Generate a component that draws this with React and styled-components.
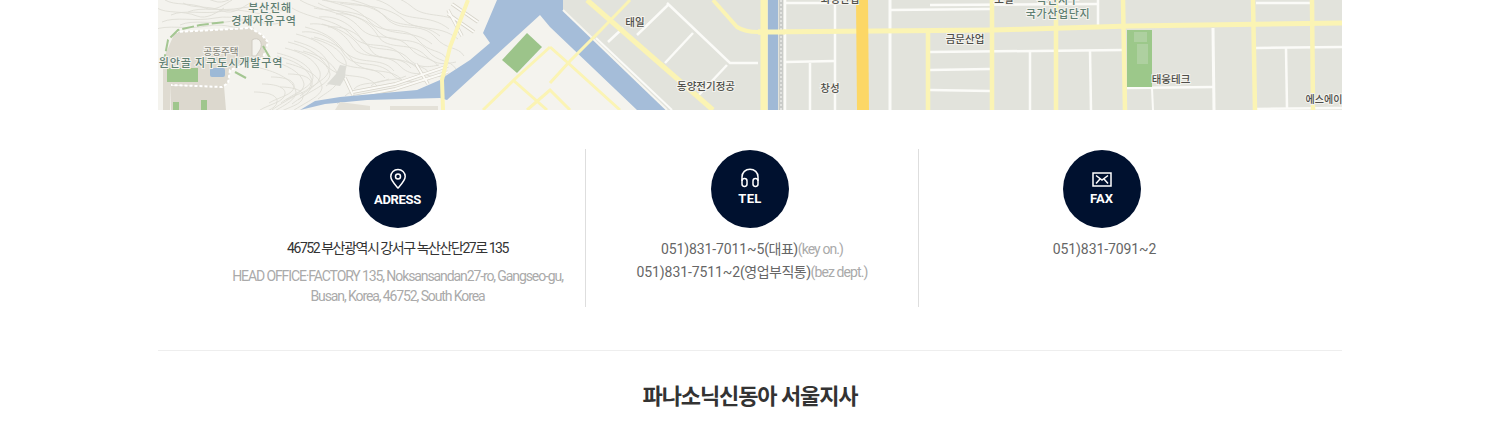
import React from 'react'
import styled, { createGlobalStyle } from 'styled-components'

const GlobalStyle = createGlobalStyle`
  * { box-sizing: border-box; }
  html, body { margin: 0; padding: 0; background: #fff; }
  body {
    font-family: Roboto, "Noto Sans CJK KR", sans-serif;
    color: #666;
    overflow: hidden;
  }
`

const Wrap = styled.div`
  width: 1184px;
  height: 430px;
  margin: 0 auto;
`

const MapBox = styled.div`
  height: 110px;
  overflow: hidden;
  svg { display: block; }
`

const InfoRow = styled.ul`
  display: grid;
  grid-template-columns: 375px 333px 372px;
  list-style: none;
  margin: 39px 0 0;
  padding: 0 0 0 52px;
  height: 158px;
`

const InfoCol = styled.li`
  display: flex;
  flex-direction: column;
  align-items: center;
  padding-top: 1px;
  border-left: ${({ $line }) => ($line ? '1px solid #dedede' : '0')};
`

const Circle = styled.div`
  width: 78px;
  height: 78px;
  flex: none;
  border-radius: 50%;
  background: #00112f;
  color: #fff;
  display: flex;
  flex-direction: column;
  align-items: center;
  padding-top: ${({ $top }) => $top}px;
  margin-right: ${({ $shift }) => $shift || 0}px;
  svg { display: block; }
`

const CircleLabel = styled.span`
  font-size: 13px;
  font-weight: 700;
  line-height: 16px;
  letter-spacing: ${({ $spacing }) => $spacing}px;
  margin-top: ${({ $gap }) => $gap}px;
`

const Address = styled.p`
  margin: 10px 0 0;
  font-size: 14px;
  line-height: 20px;
  letter-spacing: -1.45px;
  color: #333;
`

const Desc = styled.p`
  margin: 8px 0 0;
  width: 345px;
  font-size: 14px;
  line-height: 20px;
  letter-spacing: -1.1px;
  color: #aaa;
  text-align: center;
`

const Tel = styled.p`
  margin: ${({ $first }) => ($first ? '11px' : '3px')} 0 0;
  font-size: 14px;
  line-height: 20px;
  letter-spacing: -0.1px;
  color: #666;
`

const Note = styled.span`
  color: #aaa;
  letter-spacing: -0.9px;
`

const KoreanPart = styled.span`
  letter-spacing: -0.5px;
`

const Divider = styled.hr`
  margin: 43px 0 0;
  border: 0;
  border-top: 1px solid #eee;
`

const BranchTitle = styled.h2`
  margin: 31px 0 0;
  font-size: 22px;
  line-height: 30px;
  font-weight: 700;
  letter-spacing: -1.1px;
  color: #333;
  text-align: center;
`

const MapLabel = styled.text`
  font-family: "Noto Sans CJK KR", sans-serif;
  font-size: ${({ $size }) => $size || 11}px;
  font-weight: 500;
  fill: ${({ $fill }) => $fill || '#4f4f4a'};
  text-anchor: middle;
  paint-order: stroke;
  stroke: #f4f3ee;
  stroke-width: 2px;
  letter-spacing: ${({ $spacing }) => $spacing || 0}px;
`

// road lines in page coordinates
const contours = [
  'M300 0 C320 12 345 10 360 28 C375 44 395 30 410 48 C420 60 432 56 438 66',
  'M310 24 C330 22 345 34 352 46 C362 62 385 50 400 66 C410 76 420 74 430 72',
  'M296 34 C312 38 325 44 335 58 C350 74 372 62 385 78',
  'M322 0 C340 4 365 0 385 16 C400 30 420 20 440 36',
  'M285 48 C300 52 315 58 320 72 C322 84 310 88 300 96',
  'M268 60 C285 64 302 72 304 84 C304 94 285 100 272 110',
  'M262 84 C272 84 286 86 285 94 C284 102 270 104 260 110',
  'M165 0 C175 6 190 2 205 8 C215 12 225 4 232 0',
  'M162 22 C175 16 195 22 215 18 C235 14 250 24 262 20',
  'M345 96 C352 88 368 92 380 86',
]

const contourOffsets = [[0, 0], [9, -7], [18, 3], [-8, 8], [26, -10]]

const yellow = [
  ['M468 0 L450 47 L442 80 L443 110', 4],
  ['M550 47 L517 77 L483 110', 3],
  ['M513 80 L547 110', 3],
  ['M527 110 L550 90 L570 110', 3],
  ['M550 47 L567 62 L620 110', 3],
  ['M550 83 L570 61 L600 31 L630 0', 3],
  ['M587 0 L713 110', 5],
  ['M713 0 L737 27 Q745 32 758 32', 4],
  ['M758 32 L993 30 L1130 26 L1342 23', 5],
  ['M764 0 L764 110', 7],
  ['M928 30 L928 110', 4.5],
  ['M992 0 L992 110', 4.5],
  ['M1056 0 L1056 110', 4.5],
  ['M1123 0 L1125 110', 4.5],
  ['M1253 0 L1255 110', 4.5],
  ['M1312 0 L1313 110', 4.5],
]

const white = [
  ['M667 3 L730 63 L758 63', 2.5],
  ['M693 33 L665 63', 2.5],
  ['M727 65 L697 97', 2.5],
  ['M668 5 L637 35', 2.5],
  ['M608 42 L623 28', 2.5],
  ['M596 38 L672 110', 2],
  ['M785 0 L785 110', 2.5],
  ['M785 3 L857 3', 2.5],
  ['M785 62 L835 61', 2.5],
  ['M810 63 L810 110', 2.5],
  ['M835 0 L835 110', 2.5],
  ['M890 0 L890 110', 3],
  ['M890 10 L990 9', 2.5],
  ['M930 52 L1123 50', 2.5],
  ['M930 70 L990 69', 2.5],
  ['M930 90 L990 91', 2.5],
  ['M930 5 L1098 4', 2.5],
  ['M1030 50 L1030 110', 2.5],
  ['M1090 50 L1091 110', 2.5],
  ['M1098 0 L1098 26', 2.5],
  ['M1127 88 L1213 87', 2.5],
  ['M1152 88 L1153 110', 2],
  ['M1213 28 L1214 110', 3],
  ['M1256 48 L1342 47', 2.5],
  ['M1256 109 L1342 108', 2.5],
  ['M1256 3 L1312 3', 2.5],
  ['M1286 48 L1287 108', 2.5],
]

const shoreRoads = 'M345 78 L353 95 M353 92 L395 84 L448 66 M353 97 L395 89 L448 72 M416 64 L428 84 M462 36 L448 10 M452 4 L478 22 M448 14 L474 32'

const RoadMap = () => (
  <svg width="1184" height="110" viewBox="158 0 1184 110">
    <defs>
      <filter id="soft" x="0" y="0" width="100%" height="100%">
        <feGaussianBlur stdDeviation="0.45" />
      </filter>
    </defs>
    <g filter="url(#soft)">
      <rect x="158" y="0" width="1184" height="110" fill="#f4f3ee" />
      {contourOffsets.map(([dx, dy]) => (
        <g key={`${dx}-${dy}`} transform={`translate(${dx} ${dy})`}>
          {contours.map((d) => (
            <path key={d} d={d} fill="none" stroke="#dfded6" strokeWidth="0.9" />
          ))}
        </g>
      ))}

      {/* apartment zone */}
      <path d="M175 32 L250 28 L262 35 L268 42 L263 58 L230 70 L228 83 L222 87 L171 85 L170 110 L163 110 L163 60 Z" fill="#dfdbd1" />
      <path d="M171 86 L224 86 L226 110 L171 110 Z" fill="#dcd8ce" />
      <path d="M175 32 L250 28 L262 35 L268 42 L263 58 L230 70 L228 83 L222 87 L171 85" fill="none" stroke="#fff" strokeWidth="2" strokeDasharray="3 2" />
      <path d="M163 66 L168 40 L178 30 L200 25 L225 22" fill="none" stroke="#a4c692" strokeWidth="2" strokeDasharray="12 3" />
      <path d="M263 46 L270 58" fill="none" stroke="#a4c692" strokeWidth="2" />
      <path d="M235 72 L246 78" fill="none" stroke="#a4c692" strokeWidth="2" />
      <rect x="167" y="68" width="31" height="14" fill="#9fc68d" />
      <rect x="210" y="68" width="15" height="9" rx="2" fill="#9db9d6" />
      <rect x="173" y="102" width="6" height="8" fill="#9fc68d" />
      <rect x="201" y="100" width="6" height="10" fill="#9fc68d" />
      <path d="M252 40 C258 36 264 42 260 50 L256 56 L252 56 Z" fill="#f4f3ee" stroke="#cfcbc1" />
      <path d="M327 84 L336 74 L340 65 L346 66 L345 78 L340 86 Z" fill="#dcdcd6" />

      {/* small roads beside shore */}
      <path d={shoreRoads} fill="none" stroke="#d6d3c9" strokeWidth="3.4" />
      <path d={shoreRoads} fill="none" stroke="#fbfaf6" strokeWidth="2" />

      {/* water */}
      <path d="M497 0 L563 0 L563 10 L667 110 L637 110 L550 27 L540 15 L447 100 L440 98 L367 100 L325 104 L300 110 L315 101 L340 97 L417 90 L440 80 L450 73 L470 60 L490 43 L483 33 Z" fill="#a5bdd9" />

      {/* land blocks */}
      <path d="M563 0 L563 10 L667 110 L1342 110 L1342 0 Z" fill="#e2e3dc" />
      <path d="M563 10 L667 110" stroke="#f7f6f0" strokeWidth="2" fill="none" />
      <path d="M502 60 L527 33 L542 47 L517 73 Z" fill="#9cc48a" />
      <path d="M340 102 L370 106 L370 110 L335 110 Z M390 106 L438 106 L438 110 L390 110 Z" fill="#e4e1d8" />

      {white.map(([d, w]) => (
        <path key={d} d={d} fill="none" stroke="#fbfbf8" strokeWidth={w} />
      ))}
      {yellow.map(([d, w]) => (
        <path key={d} d={d} fill="none" stroke="#fbf4b4" strokeWidth={w} />
      ))}

      {/* canal and rail */}
      <rect x="768" y="0" width="10" height="110" fill="#a0b9d6" />
      <rect x="779" y="0" width="4" height="110" fill="#c9cbc8" />
      <path d="M781 0 V110" stroke="#fbfbf8" strokeWidth="1" strokeDasharray="2 2" />
      <path d="M758 32 L785 32" stroke="#fbf4b4" strokeWidth="5" />
      <path d="M862 0 L863 110" stroke="#fcd766" strokeWidth="12" fill="none" />

      {/* park */}
      <rect x="1127" y="30" width="25" height="57" fill="#9cc88a" />
      <rect x="1134" y="32" width="13" height="10" fill="#aed0a0" />
      <rect x="1137" y="44" width="11" height="20" fill="#aed0a0" />
    </g>

    <MapLabel x="270" y="12" $fill="#5f7f72" $spacing="0.8">부산진해</MapLabel>
    <MapLabel x="264" y="25" $fill="#5f7f72" $spacing="0.8">경제자유구역</MapLabel>
    <MapLabel x="221" y="55" $size="9.5" $fill="#8a8a80">공동주택</MapLabel>
    <MapLabel x="221" y="67" $fill="#5f7f72" $spacing="0.9">원안골 지구도시개발구역</MapLabel>
    <MapLabel x="635" y="26" $size="10.5">태일</MapLabel>
    <MapLabel x="706" y="90" $size="10.5">동양전기정공</MapLabel>
    <MapLabel x="830" y="92" $size="10.5">창성</MapLabel>
    <MapLabel x="840" y="3" $size="10.5">화성산업</MapLabel>
    <MapLabel x="1004" y="3" $size="10.5">모일</MapLabel>
    <MapLabel x="965" y="43" $size="10.5">금문산업</MapLabel>
    <MapLabel x="1058" y="4" $fill="#5f7f72" $spacing="0.6">녹산지구</MapLabel>
    <MapLabel x="1058" y="18" $fill="#5f7f72" $spacing="0.6">국가산업단지</MapLabel>
    <MapLabel x="1171" y="83" $size="10.5">태웅테크</MapLabel>
    <MapLabel x="1324" y="103" $size="10">에스에이</MapLabel>
  </svg>
)

const PinIcon = () => (
  <svg width="18" height="21" viewBox="0 0 18 21" fill="none" stroke="#fff" strokeWidth="1.5">
    <path d="M9 20 C5 15.5 1.8 12.5 1.8 8.6 C1.8 4.5 5 1.4 9 1.4 C13 1.4 16.2 4.5 16.2 8.6 C16.2 12.5 13 15.5 9 20 Z" />
    <circle cx="9" cy="8.4" r="2.5" />
  </svg>
)

const HeadsetIcon = () => (
  <svg width="20" height="20" viewBox="0 0 20 20" fill="none" stroke="#fff" strokeWidth="1.5">
    <path d="M2 13 V9 C2 4.5 5.5 1.2 10 1.2 C14.5 1.2 18 4.5 18 9 V13" />
    <rect x="2" y="10.5" width="5" height="8" rx="2.4" />
    <rect x="13" y="10.5" width="5" height="8" rx="2.4" />
  </svg>
)

const FaxIcon = () => (
  <svg width="20" height="15" viewBox="0 0 20 15" fill="none" stroke="#fff" strokeWidth="1.5">
    <rect x="1" y="1" width="18" height="13" />
    <path d="M4 3.5 L10 8 L16 3.5 M4 11.5 L8 7 M16 11.5 L12 7" />
  </svg>
)

export default function App() {
  return (
    <>
      <GlobalStyle />
      <Wrap>
        <MapBox>
          <RoadMap />
        </MapBox>

        <InfoRow>
          <InfoCol>
            <Circle $top={18}>
              <PinIcon />
              <CircleLabel $gap={3} $spacing={-0.3}>ADRESS</CircleLabel>
            </Circle>
            <Address>46752 부산광역시 강서구 녹산산단27로 135</Address>
            <Desc>HEAD OFFICE·FACTORY 135, Noksansandan27-ro, Gangseo-gu, Busan, Korea, 46752, South Korea</Desc>
          </InfoCol>

          <InfoCol $line>
            <Circle $top={18} $shift={4}>
              <HeadsetIcon />
              <CircleLabel $gap={3} $spacing={0.3}>TEL</CircleLabel>
            </Circle>
            <Tel $first>051)831-7011~5<KoreanPart>(대표)</KoreanPart><Note>(key on.)</Note></Tel>
            <Tel>051)831-7511~2<KoreanPart>(영업부직통)</KoreanPart><Note>(bez dept.)</Note></Tel>
          </InfoCol>

          <InfoCol $line>
            <Circle $top={22} $shift={6}>
              <FaxIcon />
              <CircleLabel $gap={4} $spacing={0}>FAX</CircleLabel>
            </Circle>
            <Tel $first>051)831-7091~2</Tel>
          </InfoCol>
        </InfoRow>

        <Divider />
        <BranchTitle>파나소닉신동아 서울지사</BranchTitle>
      </Wrap>
    </>
  )
}
